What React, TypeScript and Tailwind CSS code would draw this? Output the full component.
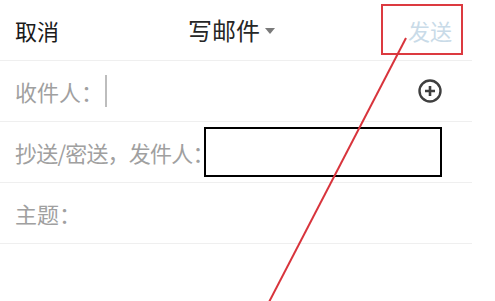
import React from 'react';

const font = { fontFamily: '"Noto Sans CJK SC", "Noto Sans", sans-serif' };

const Row: React.FC<{ children: React.ReactNode }> = ({ children }) => (
    <div className="h-[61px] flex items-center pl-[15px] pr-[30px] border-b border-[#efefef]">
        {children}
    </div>
);

export default function App() {
    return (
        <div className="relative w-[495px] h-[301px] bg-white overflow-hidden" style={font}>
            <div className="w-[472px]">
                {/* Header */}
                <div className="h-[61px] flex items-center pl-[15px] pr-[20px] border-b border-[#efefef]">
                    <span className="text-[22px] text-[#1a1a1a] leading-none">取消</span>
                    <div className="flex items-center gap-[5px] ml-[129px]">
                        <span className="text-[24px] text-[#262626] leading-none">写邮件</span>
                        <svg width="10" height="7" viewBox="0 0 10 7" className="mt-[3px]">
                            <path d="M0 0 L10 0 L5 6 Z" fill="#7a7a7a" />
                        </svg>
                    </div>
                    <span className="ml-auto text-[22px] text-[#c9dbe8] leading-none">发送</span>
                </div>

                {/* To */}
                <Row>
                    <span className="text-[22px] text-[#a0a0a0] leading-none">收件人：</span>
                    <span className="ml-[2px] w-[2px] h-[32px] bg-[#bdbdbd]" />
                    <div className="flex-1" />
                    <svg width="26" height="26" viewBox="0 0 26 26" className="mr-[-1px]">
                        <circle cx="13" cy="13" r="10.5" fill="none" stroke="#3f3f3f" strokeWidth="2.4" />
                        <path d="M13 8 V18 M8 13 H18" stroke="#3f3f3f" strokeWidth="2.6" />
                    </svg>
                </Row>

                {/* Cc / Bcc */}
                <Row>
                    <span className="text-[22px] tracking-[-0.8px] text-[#a0a0a0] leading-none">抄送/密送，发件人：</span>
                </Row>

                {/* Subject */}
                <Row>
                    <span className="text-[22px] text-[#a0a0a0] leading-none">主题：</span>
                </Row>
            </div>

            {/* Redaction box */}
            <div className="absolute left-[204px] top-[127px] w-[238px] h-[50px] border-2 border-black bg-white" />

            {/* Annotation */}
            <div className="absolute left-[381px] top-[4px] w-[82px] h-[51px] border-2 border-[#dc3a40]" />
            <svg className="absolute inset-0" width="495" height="301" viewBox="0 0 495 301">
                <line x1="406" y1="38" x2="268" y2="304" stroke="#d8343c" strokeWidth="2" />
            </svg>
        </div>
    );
}
